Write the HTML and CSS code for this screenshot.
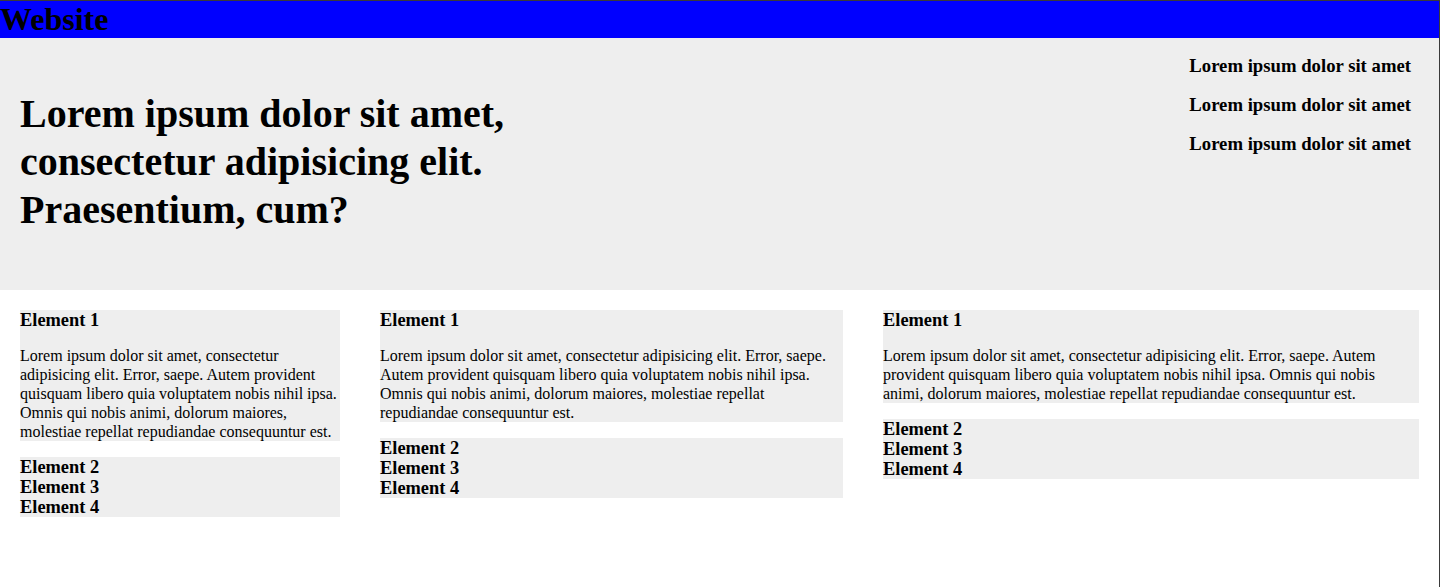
FILE: index.html
```html
<!DOCTYPE html>
<html lang="en">
<head>
<meta charset="utf-8">
<title>Website</title>
<link rel="stylesheet" href="styles.css">
</head>
<body>
<div class="page">
  <header class="site-header">
    <h1 class="logo">Website</h1>
  </header>
  <section class="hero">
    <h2 class="hero-title">Lorem ipsum dolor sit amet, consectetur adipisicing elit. Praesentium, cum?</h2>
    <ul class="hero-links">
      <li>Lorem ipsum dolor sit amet</li>
      <li>Lorem ipsum dolor sit amet</li>
      <li>Lorem ipsum dolor sit amet</li>
    </ul>
  </section>
  <main class="columns">
    <div class="col">
      <div class="box">
        <h3 class="el">Element 1</h3>
        <p class="text">Lorem ipsum dolor sit amet, consectetur adipisicing elit. Error, saepe. Autem provident quisquam libero quia voluptatem nobis nihil ipsa. Omnis qui nobis animi, dolorum maiores, molestiae repellat repudiandae consequuntur est.</p>
      </div>
      <div class="box">
        <h3 class="el">Element 2</h3>
        <h3 class="el">Element 3</h3>
        <h3 class="el">Element 4</h3>
      </div>
    </div>
    <div class="col">
      <div class="box">
        <h3 class="el">Element 1</h3>
        <p class="text">Lorem ipsum dolor sit amet, consectetur adipisicing elit. Error, saepe. Autem provident quisquam libero quia voluptatem nobis nihil ipsa. Omnis qui nobis animi, dolorum maiores, molestiae repellat repudiandae consequuntur est.</p>
      </div>
      <div class="box">
        <h3 class="el">Element 2</h3>
        <h3 class="el">Element 3</h3>
        <h3 class="el">Element 4</h3>
      </div>
    </div>
    <div class="col">
      <div class="box">
        <h3 class="el">Element 1</h3>
        <p class="text">Lorem ipsum dolor sit amet, consectetur adipisicing elit. Error, saepe. Autem provident quisquam libero quia voluptatem nobis nihil ipsa. Omnis qui nobis animi, dolorum maiores, molestiae repellat repudiandae consequuntur est.</p>
      </div>
      <div class="box">
        <h3 class="el">Element 2</h3>
        <h3 class="el">Element 3</h3>
        <h3 class="el">Element 4</h3>
      </div>
    </div>
  </main>
</div>
</body>
</html>
```

FILE: styles.css
```css
html, body {
  margin: 0;
  padding: 0;
  background: #fff;
}

body {
  font-family: "Liberation Serif", "Times New Roman", serif;
  color: #000;
}

.page {
  min-height: 586px;
  border-top: 1px solid #3a3a3a;
  border-right: 1px solid #3a3a3a;
}

.site-header {
  background: #0000ff;
}

.logo {
  margin: 0;
  font-size: 32px;
  line-height: 37px;
  font-weight: bold;
}

.hero {
  display: flex;
  justify-content: space-between;
  align-items: flex-start;
  height: 252px;
  box-sizing: border-box;
  padding: 0 28px 0 20px;
  background: #eeeeee;
}

.hero-title {
  margin: 52px 0 0;
  width: 560px;
  font-size: 40px;
  line-height: 48px;
  font-weight: bold;
}

.hero-links {
  list-style: none;
  margin: 18px 0 0;
  padding: 0;
}

.hero-links li {
  font-size: 18.72px;
  line-height: 20px;
  font-weight: bold;
  margin-bottom: 19px;
}

.columns {
  display: grid;
  grid-template-columns: 320fr 463fr 536fr;
  column-gap: 40px;
  align-items: start;
  padding: 20px;
}

.col {
  display: flex;
  flex-direction: column;
  gap: 16px;
}

.box {
  background: #eeeeee;
}

.el {
  margin: 0;
  font-size: 18.4px;
  line-height: 20px;
  font-weight: bold;
}

.text {
  margin: 16px 0 0;
  font-size: 16px;
  line-height: 19px;
}
```
